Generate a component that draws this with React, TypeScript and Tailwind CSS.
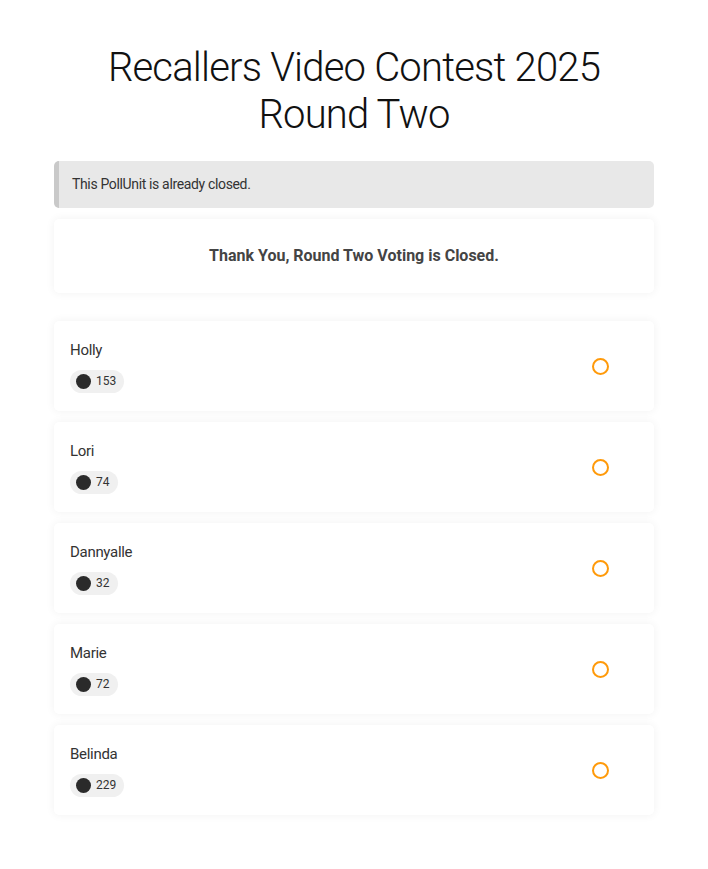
import React from "react";

const options = [
  { name: "Holly", votes: 153 },
  { name: "Lori", votes: 74 },
  { name: "Dannyalle", votes: 32 },
  { name: "Marie", votes: 72 },
  { name: "Belinda", votes: 229 },
];

export default function App() {
  return (
    <div className="min-h-screen bg-white text-[#222] [font-family:Roboto,'DejaVu_Sans_Condensed',sans-serif]">
      <div className="mx-auto w-[600px] pt-[44px]">
        <h1 className="text-center text-[40px] leading-[47px] font-light tracking-[-0.8px] text-[#111]">
          Recallers Video Contest 2025
          <br />
          Round Two
        </h1>
        <div className="mt-[23px] h-[47px] flex items-center rounded-[5px] border-l-[5px] border-[#c9c9c9] bg-[#e8e8e8] pl-[13px] text-[14px] tracking-[-0.35px] text-[#333]">
          This PollUnit is already closed.
        </div>
        <div className="mt-[11px] h-[74px] flex items-center justify-center rounded-[5px] bg-white shadow-[0_0_10px_rgba(0,0,0,0.06)] text-[16px] font-bold text-[#444]">
          Thank You, Round Two Voting is Closed.
        </div>
        <div className="mt-[28px] flex flex-col gap-[11px]">
          {options.map((o) => (
            <div
              key={o.name}
              className="h-[90px] flex items-center justify-between rounded-[5px] bg-white shadow-[0_0_10px_rgba(0,0,0,0.06)] pl-[16px] pr-[45px]"
            >
              <div className="flex flex-col items-start">
                <div className="text-[15px] leading-[20px] tracking-[-0.3px] text-[#333]">{o.name}</div>
                <div className="mt-[10px] flex items-center gap-[5px] rounded-full bg-[#f0f0f0] h-[23px] pl-[6px] pr-[8px]">
                  <span className="block h-[15px] w-[15px] rounded-full bg-[#2a2a2a]" />
                  <span className="text-[12px] text-[#333]">{o.votes}</span>
                </div>
              </div>
              <span className="block h-[17px] w-[17px] rounded-full border-2 border-[#ff9a0a]" />
            </div>
          ))}
        </div>
      </div>
    </div>
  );
}
